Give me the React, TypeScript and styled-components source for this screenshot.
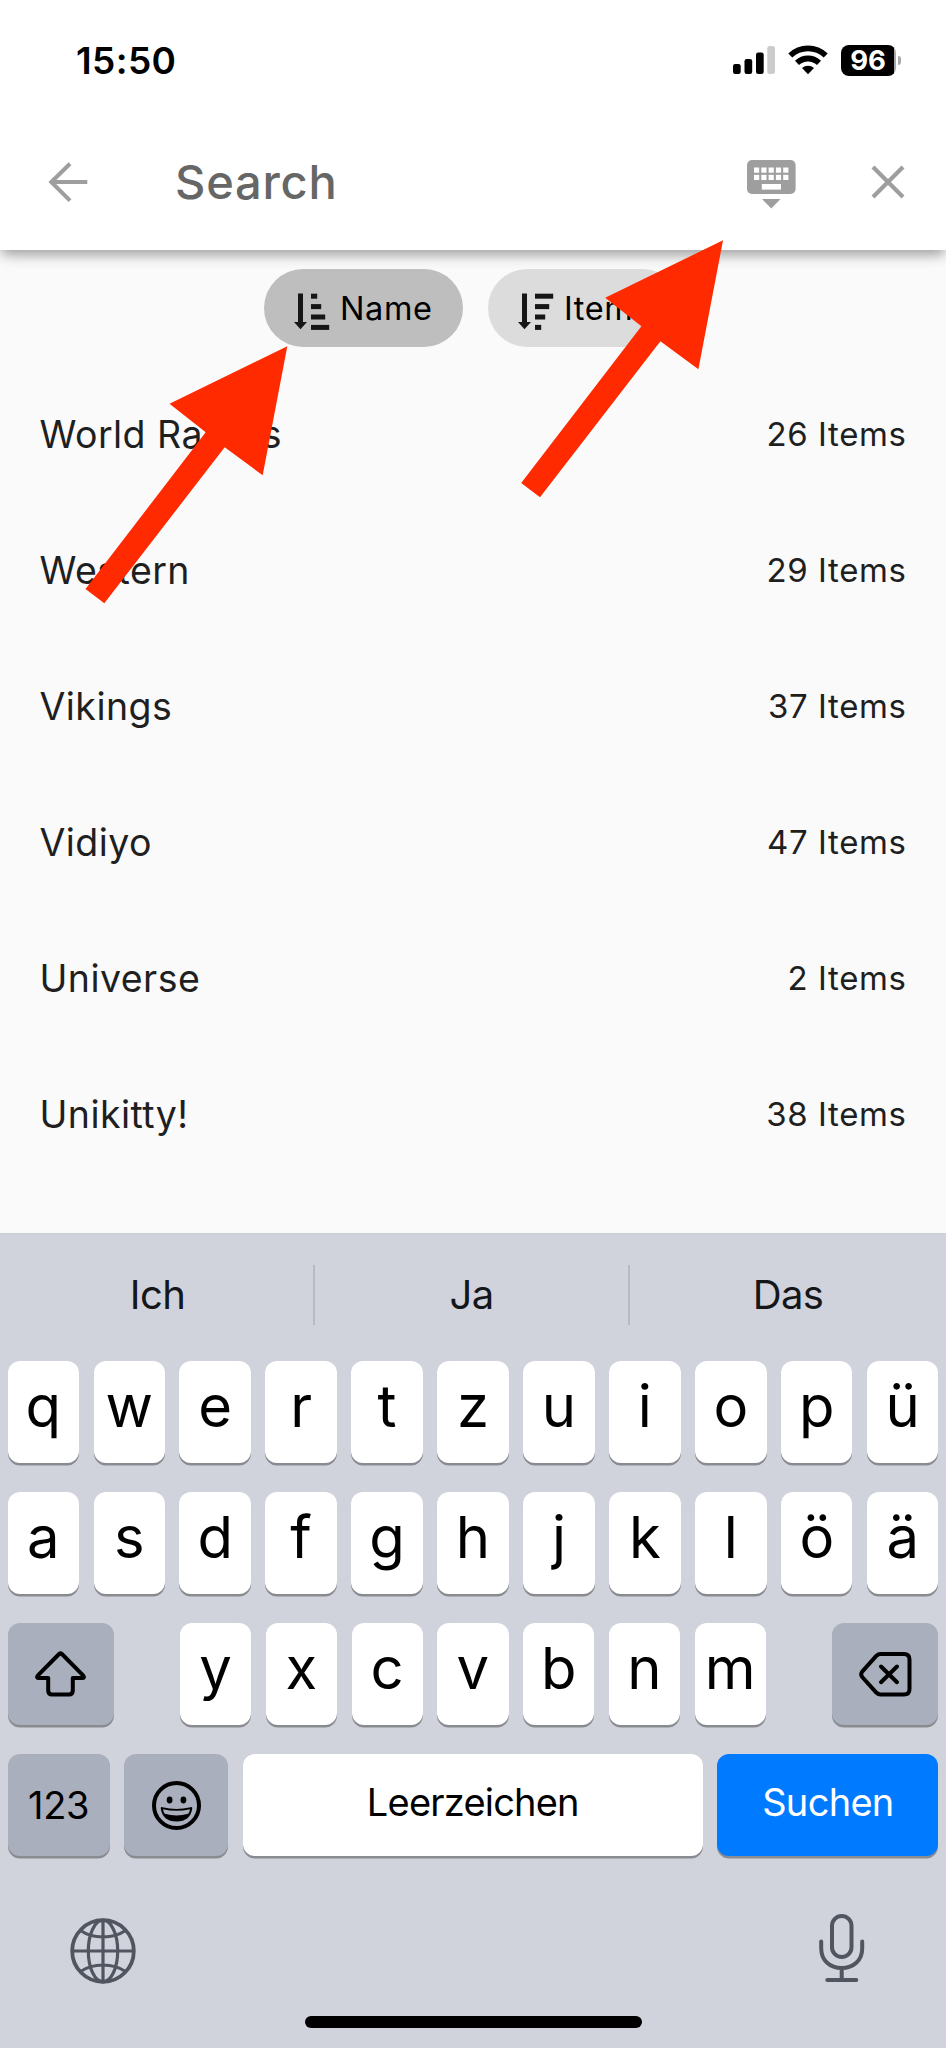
import React from "react";
import styled, { createGlobalStyle } from "styled-components";

const GlobalStyle = createGlobalStyle`
  * { box-sizing: border-box; }
  body { margin: 0; background: #fafafa; }
`;

const Screen = styled.div`
  position: relative;
  width: 946px;
  height: 2048px;
  display: flex;
  flex-direction: column;
  overflow: hidden;
  background: #fafafa;
  font-family: Inter, "Liberation Sans", sans-serif;
  svg { display: block; flex: none; }
`;

const AppBar = styled.header`
  height: 250px;
  flex: none;
  background: #fff;
  box-shadow: 0 6px 10px -2px rgba(0, 0, 0, 0.22), 0 8px 14px -2px rgba(0, 0, 0, 0.14),
    0 2px 20px rgba(0, 0, 0, 0.06);
`;

const StatusBar = styled.div`
  height: 120px;
  padding: 0 45px 0 76px;
  display: flex;
  align-items: center;
`;

const Time = styled.div`
  flex: 1;
  font-size: 37px;
  font-weight: 600;
  line-height: 44px;
  letter-spacing: 0.4px;
  padding-top: 1px;
  color: #000;
`;

const StatusIcons = styled.div`
  display: flex;
  align-items: center;
  gap: 13px;
`;

const Battery = styled.div`
  display: flex;
  align-items: center;
  gap: 2px;
`;

const BatteryBody = styled.div`
  width: 55px;
  height: 31px;
  border-radius: 8px;
  background: linear-gradient(90deg, #000 52.5px, #a8a8a8 52.5px);
  color: #fff;
  font-size: 27.5px;
  font-weight: 700;
  line-height: 31px;
  text-align: center;
  padding-right: 1px;
`;

const BatteryTip = styled.div`
  width: 3px;
  height: 9px;
  border-radius: 0 3px 3px 0;
  background: #a8a8a8;
`;

const SearchBar = styled.div`
  height: 124px;
  padding: 0 41px 0 48px;
  display: flex;
  align-items: center;
`;

const SearchField = styled.div`
  flex: 1;
  margin-left: 87px;
  font-size: 47px;
  font-weight: 500;
  line-height: 56px;
  letter-spacing: 0.8px;
  color: #666;
`;

const KeyboardSlot = styled.div`
  padding-top: 4px;
`;

const CloseSlot = styled.div`
  margin-left: 75px;
`;

const Filters = styled.div`
  display: flex;
  justify-content: center;
  gap: 25px;
  padding-top: 19px;
`;

const Chip = styled.button<{ $active?: boolean; $width: number }>`
  width: ${(p) => p.$width}px;
  height: 78px;
  padding: 0 0 0 29px;
  border: 0;
  border-radius: 39px;
  display: flex;
  align-items: center;
  gap: 10px;
  background: ${(p) => (p.$active ? "#bebebe" : "#dcdcdc")};
  color: #000;
  font: 400 32.5px/40px Inter, "Liberation Sans", sans-serif;
  letter-spacing: 0.6px;
  svg { margin-top: 7px; }
`;

const ChipLabel = styled.span`
  padding-top: 1px;
`;

const List = styled.ul`
  flex: 1;
  margin: 0;
  padding: 20px 39.5px 0;
  list-style: none;
`;

const Row = styled.li`
  height: 136px;
  display: flex;
  align-items: center;
  justify-content: space-between;
  color: #1f1f1f;
`;

const ThemeName = styled.span`
  font-size: 37.5px;
  line-height: 46px;
  letter-spacing: 0.45px;
`;

const ItemCount = styled.span`
  font-size: 33px;
  line-height: 40px;
  letter-spacing: 0.6px;
  padding-bottom: 3px;
`;

const Keyboard = styled.section`
  height: 815px;
  flex: none;
  display: flex;
  flex-direction: column;
  background: #d0d3dc;
  border-top: 1px solid #cbced5;
  color: #000;
`;

const Suggestions = styled.div`
  height: 122px;
  margin-bottom: 5px;
  display: grid;
  grid-template-columns: 313px 315px 1fr;
  align-items: center;
`;

const Suggestion = styled.div`
  height: 60px;
  line-height: 59px;
  padding-left: 2px;
  font-size: 40px;
  text-align: center;
  color: #14161a;
  letter-spacing: -0.6px;
  & + & { border-left: 2px solid #b7bac3; padding-left: 0; }
`;

const Keys = styled.div`
  padding: 0 7.6px;
  display: grid;
  row-gap: 29px;
`;

const KeyRow = styled.div<{ $columns: string }>`
  display: grid;
  grid-template-columns: ${(p) => p.$columns};
  column-gap: 14.6px;
`;

const tones = {
  light: ["#fff", "#000"],
  dark: ["#a9afbc", "#000"],
  blue: ["#007aff", "#fff"],
};

const Key = styled.button<{ $tone?: keyof typeof tones }>`
  height: 102px;
  min-width: 0;
  padding: 0;
  border: 0;
  border-radius: 12px;
  display: flex;
  align-items: center;
  justify-content: center;
  background: ${(p) => tones[p.$tone ?? "light"][0]};
  color: ${(p) => tones[p.$tone ?? "light"][1]};
  box-shadow: 0 2.4px 0 #898b90;
  font-family: Inter, "Liberation Sans", sans-serif;
`;

const Letter = styled.span`
  font-size: 58px;
  font-weight: 400;
  line-height: 70px;
  margin-bottom: 13px;
`;

const Label = styled.span<{ $lift?: number; $tracking?: number }>`
  font-size: 38px;
  line-height: 46px;
  margin-bottom: ${(p) => p.$lift ?? 0}px;
  letter-spacing: ${(p) => p.$tracking ?? -0.3}px;
`;

const Dock = styled.div`
  height: 154px;
  padding: 58px 81px 0 70px;
  display: flex;
  justify-content: space-between;
  align-items: flex-start;
`;

const GlobeSlot = styled.div`
  padding-top: 4px;
`;

const HomeIndicator = styled.div`
  width: 337px;
  height: 12px;
  margin: 6px auto 0;
  border-radius: 6px;
  background: #000;
`;

const Annotations = styled.svg`
  position: absolute;
  inset: 0;
  pointer-events: none;
`;

const SignalIcon = () => (
  <svg width="42" height="28" viewBox="0 0 42 28">
    <rect x="0" y="18" width="7.7" height="10" rx="2.2" />
    <rect x="11.5" y="13" width="7.7" height="15" rx="2.2" />
    <rect x="23" y="6.5" width="7.7" height="21.5" rx="2.2" />
    <rect x="34.3" y="0" width="7.7" height="28" rx="2.2" fill="#ccc" />
  </svg>
);

const WifiIcon = () => (
  <svg width="40" height="30" viewBox="0 0 40 30">
    <g fill="none" stroke="#000" strokeWidth="5.8">
      <path d="M2.3 10.5a25.5 25.5 0 0 1 35.4 0" />
      <path d="M9 17.9a16 16 0 0 1 22 0" />
    </g>
    <path d="M14 23a8.800 8.800 0 0 1 12 0L20 29.200z" />
  </svg>
);

const BackIcon = () => (
  <svg width="40" height="40" viewBox="0 0 40 40" fill="none" stroke="#9e9e9e" strokeWidth="4">
    <path d="M22 1.8 3.3 20 22 38.6M3.5 20H39.3" />
  </svg>
);

const HideKeyboardIcon = () => (
  <svg width="49" height="49" viewBox="0 0 49 49" fill="#9e9e9e">
    <rect width="48.6" height="34" rx="5" />
    <path d="M15 39h18.5l-9.2 9.5z" />
    <g fill="#fff">
      {[0, 1, 2, 3, 4].map((i) => (
        <React.Fragment key={i}>
          <rect x={7 + i * 7.3} y="7.5" width="5.2" height="5.2" />
          <rect x={7 + i * 7.3} y="14.8" width="5.2" height="5.2" />
        </React.Fragment>
      ))}
      <rect x="14.8" y="24" width="19.2" height="5.6" />
    </g>
  </svg>
);

const CloseIcon = () => (
  <svg width="34" height="34" viewBox="0 0 34 34" fill="none" stroke="#9e9e9e" strokeWidth="4.2">
    <path d="M2 2l30 30M32 2L2 32" />
  </svg>
);

const SortIcon = ({ widths }: { widths: number[] }) => (
  <svg width="37" height="37" viewBox="0 0 37 37" fill="#161616">
    <path d="M5 .5h5V29H14L7.500 36.300 1 29H5z" />
    {widths.map((w, i) => (
      <rect key={i} x="18" y={0.7 + i * 10.4} width={w} height="5" />
    ))}
  </svg>
);

const ShiftIcon = () => (
  <svg width="52" height="46" viewBox="0 0 52 46" fill="none" stroke="#000" strokeWidth="4" strokeLinejoin="round">
    <path d="M24.100 3Q25.500 1.800 26.900 3L48.100 24.300Q50 27 47.500 27H37.800V39.500Q37.800 43.500 34 43.500H17Q13.200 43.500 13.200 39.500V27H3.500Q1 27 2.900 24.300z" />
  </svg>
);

const BackspaceIcon = () => (
  <svg width="53" height="45" viewBox="0 0 53 45" fill="none" stroke="#000" strokeWidth="4" strokeLinejoin="round" strokeLinecap="round">
    <path d="M21.500 2H45Q50.500 2 50.500 7.500V37Q50.500 42.500 45 42.500H21.500Q19.300 42.500 17.500 40.800L3.200 25Q1.200 22.300 3.200 19.600L17.500 3.700Q19.300 2 21.500 2z" />
    <path d="M22 14.500l16 15.700M38 14.500L22 30.200" />
  </svg>
);

const EmojiIcon = () => (
  <svg width="49" height="49" viewBox="0 0 49 49">
    <circle cx="24.500" cy="24.500" r="22.500" fill="none" stroke="#000" strokeWidth="4" />
    <ellipse cx="17.600" cy="19" rx="2.900" ry="3.400" />
    <ellipse cx="31.400" cy="19" rx="2.900" ry="3.400" />
    <path d="M8.700 27.300Q8.700 25.600 10.500 26.200Q24.500 29.600 38.500 26.200Q40.300 25.600 40.300 27.300Q38.500 40.500 24.500 40.500Q10.500 40.500 8.700 27.300z" />
    <path d="M11 28.200Q24.500 31.500 38 28.200Q37.600 30.800 36.200 32.800Q24.500 36.200 12.800 32.800Q11.400 30.800 11 28.200z" fill="#a9afbc" />
  </svg>
);

const GlobeIcon = () => (
  <svg width="66" height="66" viewBox="0 0 66 66" fill="none" stroke="#50555f" strokeWidth="3.200">
    <circle cx="33" cy="33" r="30.800" strokeWidth="3.800" />
    <ellipse cx="33" cy="33" rx="14.700" ry="30.800" />
    <path d="M33 2v62M2 33h62M10.500 12.500Q20 19 33 19T55.500 12.500M10.500 53.500Q20 47 33 47T55.500 53.500" />
  </svg>
);

const MicIcon = () => (
  <svg width="46" height="70" viewBox="0 0 46 70" fill="none" stroke="#50555f" strokeWidth="4" strokeLinecap="round">
    <rect x="13" y="2" width="19.500" height="41" rx="9.750" />
    <path d="M2.200 27.500V34.500C2.200 46.500 11 54 22.700 54S43.200 46.500 43.200 34.500V27.500M22.700 54.500V65.500M8.300 66H37.300" />
  </svg>
);

const themes: [string, number][] = [
  ["World Racers", 26],
  ["Western", 29],
  ["Vikings", 37],
  ["Vidiyo", 47],
  ["Universe", 2],
  ["Unikitty!", 38],
];

const arrowPoints =
  "287.3,346.3 169.500,403.7 205.7,432.3 85.500,589 104.3,603.3 224.7,447.3 262.7,475.3";

const letters = (text: string) =>
  [...text].map((c) => (
    <Key key={c}>
      <Letter>{c}</Letter>
    </Key>
  ));

export default function App() {
  return (
    <Screen>
      <GlobalStyle />
      <AppBar>
        <StatusBar>
          <Time>15:50</Time>
          <StatusIcons>
            <SignalIcon />
            <WifiIcon />
            <Battery>
              <BatteryBody>96</BatteryBody>
              <BatteryTip />
            </Battery>
          </StatusIcons>
        </StatusBar>
        <SearchBar>
          <BackIcon />
          <SearchField>Search</SearchField>
          <KeyboardSlot>
            <HideKeyboardIcon />
          </KeyboardSlot>
          <CloseSlot>
            <CloseIcon />
          </CloseSlot>
        </SearchBar>
      </AppBar>

      <Filters>
        <Chip $active $width={199}>
          <SortIcon widths={[6.2, 10.2, 14.2, 18.2]} />
          <ChipLabel>Name</ChipLabel>
        </Chip>
        <Chip $width={194}>
          <SortIcon widths={[18.2, 14.2, 10.2, 6.2]} />
          <ChipLabel>Items</ChipLabel>
        </Chip>
      </Filters>

      <List>
        {themes.map(([name, count]) => (
          <Row key={name}>
            <ThemeName>{name}</ThemeName>
            <ItemCount>{count} Items</ItemCount>
          </Row>
        ))}
      </List>

      <Keyboard>
        <Suggestions>
          <Suggestion>Ich</Suggestion>
          <Suggestion>Ja</Suggestion>
          <Suggestion>Das</Suggestion>
        </Suggestions>
        <Keys>
          <KeyRow $columns="repeat(11, 1fr)">{letters("qwertzuiopü")}</KeyRow>
          <KeyRow $columns="repeat(11, 1fr)">{letters("asdfghjklöä")}</KeyRow>
          <KeyRow $columns="106px 37.2px repeat(7, 71.2px) 1fr 106px">
            <Key $tone="dark">
              <ShiftIcon />
            </Key>
            <span />
            {letters("yxcvbnm")}
            <span />
            <Key $tone="dark">
              <BackspaceIcon />
            </Key>
          </KeyRow>
          <KeyRow $columns="102px 104px 1fr 221px">
            <Key $tone="dark">
              <Label>123</Label>
            </Key>
            <Key $tone="dark">
              <EmojiIcon />
            </Key>
            <Key>
              <Label $lift={7} $tracking={-0.8}>Leerzeichen</Label>
            </Key>
            <Key $tone="blue">
              <Label $lift={7} $tracking={-0.7}>Suchen</Label>
            </Key>
          </KeyRow>
        </Keys>
        <Dock>
          <GlobeSlot>
            <GlobeIcon />
          </GlobeSlot>
          <MicIcon />
        </Dock>
        <HomeIndicator />
      </Keyboard>

      <Annotations width="946" height="2048" viewBox="0 0 946 2048" fill="#ff2a00">
        <polygon points={arrowPoints} />
        <polygon points={arrowPoints} transform="translate(435.7 -106)" />
      </Annotations>
    </Screen>
  );
}
